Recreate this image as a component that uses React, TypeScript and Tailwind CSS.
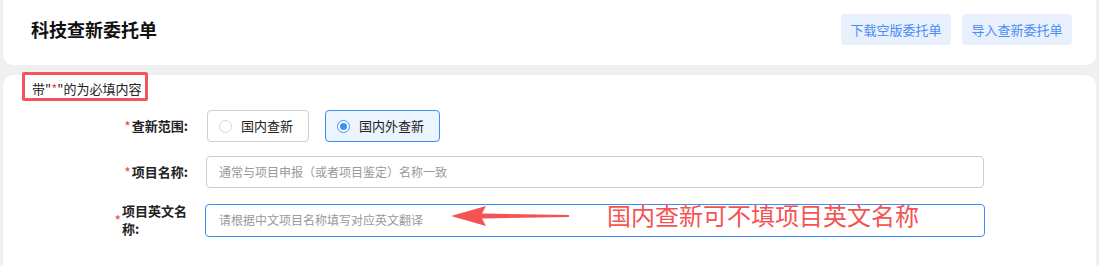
import React from 'react';

const font = { fontFamily: '"Noto Sans CJK SC", "Noto Sans", sans-serif' };

function Label({ text, narrow }: { text: string; narrow?: boolean }) {
  return (
    <div className="w-[185px] shrink-0 flex items-center justify-end">
      <span className="text-[#f04848] text-[14px] mr-[1px]">*</span>
      <span className={`text-[13px] font-bold text-[#222] leading-[18px] ${narrow ? 'w-[66px]' : ''}`}>{text}</span>
    </div>
  );
}

function Radio({ label, checked }: { label: string; checked?: boolean }) {
  return (
    <div
      className={`h-[32px] flex items-center pl-[11px] pr-[15px] rounded-[4px] border ${
        checked ? 'border-[#3d8ff5] bg-[#ecf4ff]' : 'border-[#cfcfcf] bg-white'
      }`}
    >
      <span
        className={`w-[13px] h-[13px] rounded-full flex items-center justify-center border ${
          checked ? 'border-[#3d8ff5] bg-white' : 'border-[#d4d4d4] bg-white'
        }`}
      >
        {checked && <span className="w-[7px] h-[7px] rounded-full bg-[#3d8ff5]" />}
      </span>
      <span className="ml-[9px] text-[13px] text-[#222]">{label}</span>
    </div>
  );
}

export default function App() {
  return (
    <div className="w-[1099px] h-[266px] bg-[#f0f0f0] overflow-hidden px-[3px] flex flex-col gap-[10px]" style={font}>
      {/* header */}
      <div className="h-[65px] shrink-0 bg-white rounded-b-[10px] flex items-center justify-between pl-[28px] pr-[24px] pb-[6px]">
        <h1 className="text-[18px] font-bold text-[#111]">科技查新委托单</h1>
        <div className="flex gap-[11px]">
          <button className="w-[110px] h-[31px] rounded-[4px] bg-[#e8f0fe] text-[13px] text-[#4a8ef0]">下载空版委托单</button>
          <button className="w-[110px] h-[31px] rounded-[4px] bg-[#e8f0fe] text-[13px] text-[#4a8ef0]">导入查新委托单</button>
        </div>
      </div>

      {/* form */}
      <div className="relative flex-1 bg-white rounded-t-[10px]">
        <div className="pl-[29px] pt-[4px] text-[13px] leading-[20px] text-[#222]">
          带"<span className="text-[#f04848]">*</span>"的为必填内容
        </div>
        <div className="absolute left-[19px] top-[-3px] w-[126px] h-[29px] border-[3px] border-[#f5555a] rounded-[2px]" />

        <div className="flex flex-col gap-[14px] mt-[11px]">
          <div className="flex items-center gap-[19px]">
            <Label text="查新范围:" />
            <div className="flex gap-[16px]">
              <Radio label="国内查新" />
              <Radio label="国内外查新" checked />
            </div>
          </div>
          <div className="flex items-center gap-[18px]">
            <Label text="项目名称:" />
            <div className="w-[778px] h-[32px] rounded-[4px] border border-[#cccccc] flex items-center pl-[12px] text-[12px] text-[#999]">
              通常与项目申报（或者项目鉴定）名称一致
            </div>
          </div>
          <div className="flex items-center gap-[17px]">
            <Label text="项目英文名称:" narrow />
            <div className="w-[780px] h-[33px] rounded-[4px] border border-[#3d8ff5] flex items-center pl-[13px] text-[12px] text-[#999]">
              请根据中文项目名称填写对应英文翻译
            </div>
          </div>
        </div>

        {/* annotation */}
        <svg className="absolute left-[445px] top-[130px]" width="125" height="22" viewBox="0 0 125 22">
          <path d="M3 11 L38 1 L34 8.5 L121 10 L121 12 L34 13.5 L38 21 Z" fill="#f55353" />
        </svg>
        <div className="absolute left-[604px] top-[124px] text-[24px] leading-[32px] text-[#f55353]">国内查新可不填项目英文名称</div>
      </div>
    </div>
  );
}
